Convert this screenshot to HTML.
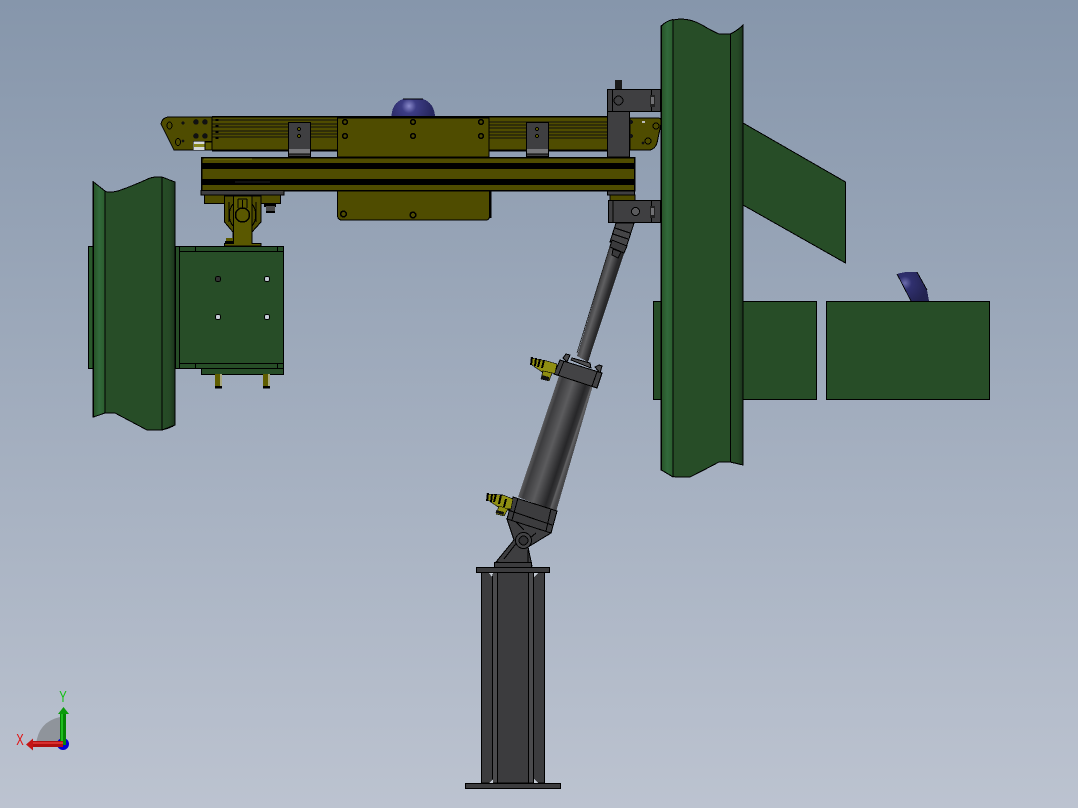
<!DOCTYPE html>
<html><head><meta charset="utf-8"><style>
html,body{margin:0;padding:0;width:1078px;height:808px;overflow:hidden;background:#a0abbb}
svg{display:block;position:absolute;left:0;top:0}
</style></head><body>
<svg width="1078" height="808" viewBox="0 0 1078 808" xmlns="http://www.w3.org/2000/svg" shape-rendering="crispEdges">
<defs>
<linearGradient id="bg" x1="0" y1="0" x2="0" y2="1"><stop offset="0" stop-color="#8696ab"/><stop offset="1" stop-color="#bcc3d0"/></linearGradient>
<linearGradient id="fl" x1="0" y1="0" x2="1" y2="0"><stop offset="0" stop-color="#275227"/><stop offset=".5" stop-color="#31693a"/><stop offset="1" stop-color="#2b5c2e"/></linearGradient>
<linearGradient id="fr" x1="0" y1="0" x2="1" y2="0"><stop offset="0" stop-color="#274d27"/><stop offset=".6" stop-color="#254825"/><stop offset="1" stop-color="#1b331c"/></linearGradient>
<linearGradient id="cyl" gradientUnits="userSpaceOnUse" x1="538" y1="437" x2="574" y2="449"><stop offset="0" stop-color="#5a5a5c"/><stop offset=".08" stop-color="#4a4a4c"/><stop offset=".12" stop-color="#3c3c3e"/><stop offset=".42" stop-color="#5c5c5e"/><stop offset=".76" stop-color="#262628"/><stop offset=".88" stop-color="#3a3a3c"/><stop offset=".91" stop-color="#626264"/><stop offset="1" stop-color="#474749"/></linearGradient>
<linearGradient id="rod" gradientUnits="userSpaceOnUse" x1="593.600" y1="300" x2="604.600" y2="303.400"><stop offset="0" stop-color="#3f3f41"/><stop offset=".4" stop-color="#606062"/><stop offset="1" stop-color="#2a2a2c"/></linearGradient>
<radialGradient id="dome" gradientUnits="userSpaceOnUse" cx="409" cy="106" r="24"><stop offset="0" stop-color="#8a8acb"/><stop offset=".3" stop-color="#3c3c84"/><stop offset="1" stop-color="#26265e"/></radialGradient>
<radialGradient id="dome2" gradientUnits="userSpaceOnUse" cx="905" cy="283" r="22"><stop offset="0" stop-color="#6c6cac"/><stop offset=".3" stop-color="#30306f"/><stop offset="1" stop-color="#232350"/></radialGradient>
</defs>
<rect width="1078" height="808" fill="url(#bg)"/>

<!-- right assembly behind beam -->
<g stroke="#000" stroke-width="1">
<polygon points="743,123 845.500,182 845.500,263 743,205" fill="#274d27"/>
<rect x="653.500" y="301.500" width="163" height="98" fill="#274d27"/>
<rect x="826.500" y="301.500" width="163" height="98" fill="#274d27"/>
</g>
<path d="M897,274 Q906,271 917,272 L927,290 L929,301 L911,301 Z" fill="url(#dome2)"/>
<path d="M897,274 L911,301 M917,272 L927,290" stroke="#000" stroke-width=".8" fill="none"/>

<!-- left plate and box -->
<g stroke="#000" stroke-width="1">
<rect x="88.500" y="246.500" width="6" height="122" fill="#2a5a2c"/>
<rect x="201.500" y="368.500" width="82" height="6" fill="#274d27"/>
<rect x="175.500" y="246.500" width="108" height="122" fill="#274d27"/>
<path d="M179.500,246.500V368.500M179.500,251.500H283.500M179.500,363.500H283.500M195.500,246.500V251.500M277.500,246.500V251.500M195.500,363.500V368.500M277.500,363.500V368.500" fill="none"/>
</g>
<rect x="215" y="374" width="7" height="13" fill="#5f5d00"/><rect x="220" y="374" width="2" height="13" fill="#a8a880"/><rect x="215" y="386" width="7" height="2.500" fill="#000"/>
<rect x="263" y="374" width="7" height="13" fill="#5f5d00"/><rect x="268" y="374" width="2" height="13" fill="#a8a880"/><rect x="263" y="386" width="7" height="2.500" fill="#000"/>
<g stroke="#000" stroke-width="1"><circle cx="218" cy="279" r="2.700" fill="#333"/><circle cx="267" cy="279" r="2.700" fill="#c0c7d0"/><circle cx="218" cy="317" r="2.700" fill="#c5ccd6"/><circle cx="267" cy="317" r="2.700" fill="#c5ccd6"/></g>

<!-- left beam -->
<path d="M93,182 L103,191 Q110,193 118,191 Q135,185 150,178 Q158,176 163,177.500 L175,182 L175,425 Q170,428 162,430 L147,430 Q130,421 115,413 L105,413 L93,417 Z" fill="#274d27" stroke="#000"/>
<path d="M93.500,182 L105,191 L105,413 L93.500,417 Z" fill="url(#fl)" stroke="#000"/>
<path d="M162,177 L175,182 L175,425 L162,430 Z" fill="url(#fr)" stroke="#000"/>

<!-- clevis under rail -->
<g stroke="#000" stroke-width="1">
<rect x="204.500" y="195" width="76" height="8.500" fill="#4f4c00"/>
<path d="M224.500,196 L224.500,222 L233,232 L233,243 L252,243 L252,232 L261,222 L261,196 Z" fill="#4f4c00"/>
<path d="M233.500,196 L233.500,243.500 L224.500,243.500 L224.500,246 L261,246 L261,243.500 L252,243.500 L252,196 Z" fill="#5a5800"/>
<path d="M233,204 A18,18 0 0 0 233,226 M252,204 A18,18 0 0 1 252,226 M229,202V222M256,202V222M238,199V208M247,199V208M238,199H247" fill="none"/>
<circle cx="242.500" cy="215" r="7" fill="#5a5800" stroke-width="1.500"/>
<path d="M242.500,200V208" fill="none" stroke-width="1"/>
</g>
<rect x="264" y="204" width="12" height="3" fill="#000"/><rect x="266" y="206" width="9" height="7" fill="#4a4a4a"/><rect x="266" y="211" width="9" height="2" fill="#000"/>
<rect x="226" y="238" width="7" height="6" fill="#5a5800"/><rect x="225" y="241" width="9" height="3" fill="#000"/>

<!-- upper arm band -->
<path d="M161,124 Q162,118 168,117 L212,117 L212,150 L174,150 Z" fill="#4f4c00" stroke="#000" stroke-width="1"/>
<rect x="193" y="141" width="19" height="9" fill="#d6dadc" stroke="#000" stroke-width=".5"/>
<rect x="194" y="144" width="11" height="3" fill="#8a8a20"/>
<rect x="205" y="142" width="8" height="8" fill="#5f5d00" stroke="#000" stroke-width="1"/>
<rect x="212" y="116.500" width="396" height="34" fill="#4f4c00"/>
<path d="M212,116.500H608" stroke="#000" stroke-width="1.500"/>
<path d="M212,150.500H608" stroke="#000" stroke-width="2"/>
<path d="M212,120H338M212,124H338M212,127H338M212,131H338M212,134H338M212,137H338M489,122H607M489,125H607M489,128H607M489,132H607M489,135H607M489,138H607" stroke="#111" stroke-width=".8"/>
<path d="M212,117V150" stroke="#000"/>
<path d="M217,119v2M217,125v2M217,131v2M217,137v2" stroke="#000" stroke-width="3"/>
<path d="M630,118 L659,118 Q662,119 661,124 L657,143 Q655,149 650,150 L630,150 Z" fill="#4f4c00" stroke="#000"/>
<g fill="#111"><circle cx="196" cy="122" r="2.800"/><circle cx="205" cy="122" r="2.800"/><circle cx="196" cy="136" r="2.800"/><circle cx="205" cy="136" r="2.800"/><circle cx="183" cy="123" r="1.600"/><circle cx="183" cy="141" r="1.300"/></g>
<g fill="none" stroke="#000"><ellipse cx="169.500" cy="125.500" rx="2.500" ry="3.500"/><ellipse cx="178" cy="142" rx="2.500" ry="3.500"/><circle cx="656" cy="126" r="3"/><circle cx="648" cy="141" r="3"/></g>
<circle cx="643" cy="143" r="1.400" fill="#111"/><rect x="642" y="121" width="3" height="2" fill="#bbb"/>
<circle cx="631" cy="122" r="2" fill="#111"/><circle cx="631" cy="136" r="2" fill="#111"/>

<!-- dome and centre plate -->
<path d="M391.500,116 Q392,103 403,99 L423,99 Q434,103 435,116 Z" fill="url(#dome)"/>
<path d="M403,99H423" stroke="#000"/>
<path d="M337.500,118 H489 V157 H337.500 Z" fill="#4f4c00" stroke="#000"/>
<path d="M337.500,191 H489.500 V216 Q489.500,220 486,220 L342,220 Q337.500,220 337.500,215 Z" fill="#4f4c00" stroke="#000"/>
<path d="M490.500,191V218" stroke="#000" stroke-width="1.500"/>
<g fill="#4f4c00" stroke="#000" stroke-width="1.600"><circle cx="345" cy="122" r="2.300"/><circle cx="413" cy="122" r="2.300"/><circle cx="481" cy="122" r="2.300"/><circle cx="345" cy="136" r="2.300"/><circle cx="413" cy="136" r="2.300"/><circle cx="481" cy="136" r="2.300"/><circle cx="343.500" cy="214" r="2.800"/><circle cx="413" cy="215" r="2.800"/></g>

<!-- grey brackets on arm -->
<g stroke="#000" stroke-width="1">
<rect x="288.500" y="122.500" width="22" height="34" fill="#3f3f41"/>
<rect x="526.500" y="122.500" width="22" height="34" fill="#3f3f41"/>
</g>
<rect x="289" y="149" width="21" height="5" fill="#77777a"/><rect x="527" y="149" width="21" height="5" fill="#77777a"/>
<path d="M289,154H310M527,154H548" stroke="#000"/>
<g fill="#5a5800" stroke="#000" stroke-width=".8"><circle cx="299" cy="129" r="1.600"/><circle cx="299" cy="136" r="1.600"/><circle cx="537" cy="129" r="1.600"/><circle cx="537" cy="136" r="1.600"/></g>

<!-- right grey blocks -->
<rect x="615" y="80" width="7" height="10" fill="#1b1b1b"/>
<rect x="607.500" y="111" width="22" height="46" fill="#3f3f41" stroke="#000"/>
<rect x="610" y="195" width="25" height="5.500" fill="#4f4c00" stroke="#000" stroke-width=".6"/>
<rect x="607.500" y="190" width="27" height="5" fill="#3f3f41" stroke="#000"/>
<g stroke="#000" stroke-width="1">
<rect x="607.500" y="89.500" width="53" height="22" fill="#3f3f41"/>
<rect x="608.500" y="200.500" width="52" height="22" fill="#3f3f41"/>
<path d="M612.500,90V111M613,201V222M651.500,90V111M651.500,201V222" fill="none"/>
<circle cx="618.500" cy="100.500" r="4.500" fill="none"/>
<circle cx="635.500" cy="211.500" r="4" fill="#5a5a5c"/>
</g>
<rect x="650" y="95" width="5" height="12" fill="#222"/><rect x="651" y="97" width="3" height="7" fill="#707073"/>
<rect x="650" y="206" width="5" height="12" fill="#222"/><rect x="651" y="208" width="3" height="7" fill="#707073"/>

<!-- main rail -->
<rect x="201.500" y="157.500" width="433" height="33" fill="#4f4c00" stroke="#000" stroke-width="1.500"/>
<rect x="202" y="163" width="432" height="6" fill="#000"/>
<rect x="202" y="179" width="432" height="6" fill="#000"/>
<path d="M204,159H252" stroke="#7c7a10" stroke-width="1"/>
<path d="M235,182H270" stroke="#222"/>
<rect x="201" y="190.500" width="83" height="4.500" fill="#3f3f41" stroke="#000" stroke-width=".8"/>

<!-- rod end -->
<polygon points="577,356 611,243 626,248 588,362" fill="url(#rod)" stroke="none"/>
<path d="M577,353L611,243M588,361L624,250" stroke="#222" stroke-width=".8" fill="none"/>
<polygon points="616,223 634,223 626,248 610,242" fill="#454547" stroke="#000"/>
<polygon points="612,240 627,246 624,253 610,247" fill="#3a3a3c" stroke="#000"/>
<path d="M615,228L630,233M613,234L628,239" stroke="#000"/>
<polygon points="613,249 621,252 618,258 612,255" fill="#3a3a3c" stroke="#000"/>

<!-- cylinder body -->
<polygon points="518,497 560,373 593,385 556,512" fill="url(#cyl)"/>

<!-- top head -->
<g stroke="#000" stroke-width="1">
<polygon points="563,358 566,354 570,355 567,362" fill="#4c4c4e"/>
<polygon points="595,367 599,365 602,366 600,373" fill="#4c4c4e"/>
<polygon points="571,360 572,358 590,363 591,368" fill="#4f4f51"/>
<polygon points="560,360 602,373 597,388 554,374" fill="#434345"/>
<path d="M564,361 L558,376 M597,372 L592,386" fill="none"/>
<!-- bottom cap -->
<polygon points="513,497 557,511 551,533 507,519" fill="#3c3c3e"/>
<path d="M508,510 L552,525 M518,498 L512,520 M551,509 L546,531" fill="none"/>
<polygon points="507,519 551,533 528,547 532,566 496,562 514,540" fill="#3e3e40"/>
<path d="M516,522 L524,530 M536,533 L530,538 M518,541 L504,559 M528,550 L528,564" fill="none"/>
<circle cx="523.500" cy="540.500" r="8" fill="#434345"/>
<circle cx="523.500" cy="540.500" r="4.500" fill="#333335"/>
</g>

<!-- fittings -->
<g>
<polygon points="531,358 547,361 557,364 555,373 545,374 532,365" fill="#8f8e12" stroke="#000" stroke-width=".6"/>
<path d="M532,357l-1,8M536,358l-1,8M540,359l-2,8M544,360l-2,8" stroke="#000" stroke-width="2"/>
<polygon points="543,371 552,373 549,381 541,379" fill="#8f8e12" stroke="#000" stroke-width=".6"/>
<rect x="541" y="376" width="8" height="4" fill="#111" transform="rotate(15 545 378)"/>
<polygon points="487,494 503,495 513,499 511,509 501,509 488,500" fill="#8f8e12" stroke="#000" stroke-width=".6"/>
<path d="M488,493l-1,8M492,494l-1,8M496,494l-2,8M501,495l-2,9M506,499l-2,8" stroke="#000" stroke-width="2"/>
<polygon points="499,506 508,509 504,516 496,514" fill="#8f8e12" stroke="#000" stroke-width=".6"/>
<rect x="496" y="511" width="8" height="3" fill="#111" transform="rotate(15 500 512)"/>
</g>

<!-- pedestal -->
<g stroke="#000" stroke-width="1" fill="#3c3c3e">
<rect x="494.500" y="562.500" width="37" height="5"/>
<rect x="481.500" y="572" width="11" height="211"/>
<rect x="492.500" y="572" width="5" height="211" fill="#4a4a4c"/>
<rect x="533.500" y="572" width="11" height="211"/>
<rect x="528.500" y="572" width="5" height="211" fill="#4a4a4c"/>
<rect x="497.500" y="572" width="31" height="211"/>
<rect x="476.500" y="567.500" width="73" height="5"/>
<rect x="465.500" y="783.500" width="95" height="5"/>
</g>
<g fill="#c5cbd5"><polygon points="489,573 493,573 492,577"/><polygon points="534,573 538,573 534,577"/><polygon points="493,779 493,783 489,783"/><polygon points="534,779 534,783 538,783"/></g>

<!-- right beam -->
<path d="M661,26 Q668,20 680,19 Q692,19 702,25 Q712,31 719,34 L730,34 Q737,31 743,25 L743,465 L730,462 L719,462 Q704,470 690,477 L675,477 L661,470 Z" fill="#274d27" stroke="#000"/>
<path d="M661.500,26 Q666,21 673,19.500 L673,477 L661.500,470 Z" fill="url(#fl)" stroke="#000"/>
<path d="M730.500,34 Q737,31 743,25 L743,465 L730.500,462 Z" fill="url(#fr)" stroke="#000"/>

<!-- triad -->
<path d="M60,745 L36,745 Q38,722 60,717 Z" fill="#8f949b" shape-rendering="auto"/>
<circle cx="63" cy="744" r="6" fill="#0000d0" shape-rendering="auto"/>
<rect x="60" y="712" width="6" height="33" fill="#058505"/><rect x="61" y="712" width="2" height="33" fill="#1fbf1f"/>
<polygon points="63.500,707 69,714 58,714" fill="#0a9a0a" shape-rendering="auto"/>
<rect x="32" y="741" width="31" height="6" fill="#b01010"/><rect x="32" y="742" width="31" height="2" fill="#d83030"/>
<polygon points="26,744.500 33,738.500 33,750.500" fill="#c41515" shape-rendering="auto"/>
<text transform="translate(63 702) scale(.7 1)" font-family="Liberation Sans, sans-serif" font-size="16" fill="#10c010" text-anchor="middle">Y</text>
<text transform="translate(20 745) scale(.7 1)" font-family="Liberation Sans, sans-serif" font-size="16" fill="#e01010" text-anchor="middle">X</text>
</svg>
</body></html>
